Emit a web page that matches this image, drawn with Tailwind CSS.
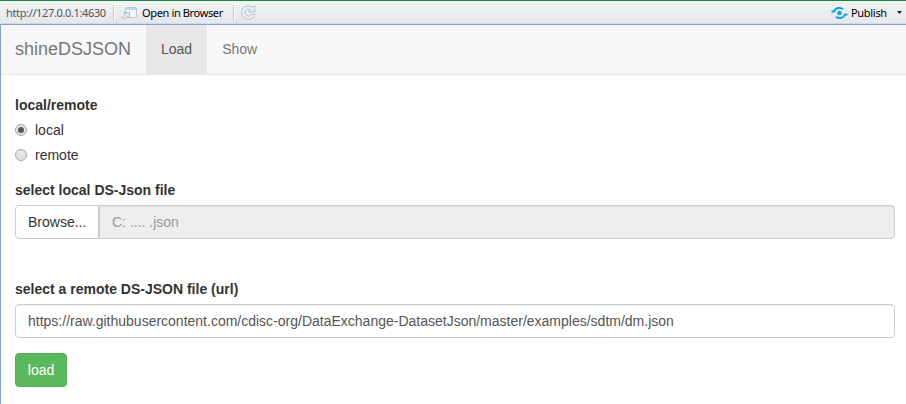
<!DOCTYPE html>
<html lang="en">
<head>
<meta charset="utf-8">
<title>shineDSJSON</title>
<script src="https://cdn.jsdelivr.net/npm/@tailwindcss/browser@4"></script>
</head>
<body class="flex h-screen flex-col overflow-hidden bg-white font-['Liberation_Sans',Arial,sans-serif] text-sm leading-5 text-[#333]">
  <header class="flex h-6 shrink-0 items-center border-t border-[#15883e] bg-linear-to-b from-[#f2f3f5] to-[#e4e7eb] font-['Noto_Sans',sans-serif] text-[11px] leading-none text-black shadow-[inset_0_-1px_0_#d5d9dd]">
    <span class="ml-1.5 w-[107px] whitespace-nowrap tracking-[-0.36px] text-[#555]">http://127.0.0.1:4630</span>
    <span class="h-[15px] w-0.5 border-r border-white bg-[#c4c7ca]"></span>
    <svg class="ml-[6px]" width="17" height="14" viewBox="0 0 17 14" fill="none">
      <rect x="4.5" y="1.500" width="11" height="10" rx="1.500" fill="#f5f9fc" stroke="#b9cbd9"/>
      <path d="M5 2h10v2H5z" fill="#bcdcf0"/>
      <path d="M3 6.500h5.500V12L6.700 10.200 3.500 13 1 11.500 4.600 8.200z" fill="#e5eaf0" stroke="#a5b0bb" stroke-width=".8"/>
    </svg>
    <span class="ml-[4px] w-[91px] whitespace-nowrap tracking-[-0.36px]">Open in Browser</span>
    <span class="h-[15px] w-0.5 border-r border-white bg-[#c4c7ca]"></span>
    <svg class="ml-[5px]" width="17" height="17" viewBox="0 0 17 17">
      <path d="M12.600 3.200 14.800 1.500V7.800H8.500L10.500 5.600A3.500 3.500 0 1 0 11.700 10.200H15A6.900 6.900 0 1 1 12.600 3.200Z" fill="#e5edf5" stroke="#b2bfcc" stroke-width=".9" stroke-linejoin="round"/>
    </svg>
    <svg class="ml-auto" width="17" height="14" viewBox="0 0 17 14" fill="none" stroke="#189fe5" stroke-width="2">
      <circle cx="8.500" cy="7" r="2.300" fill="#189fe5" stroke="none"/>
      <path d="M.5 5.500H3C4.500 1.500 9.500 1 12 3.200M16.500 8.500H14C12.500 12.500 7.500 13 5 10.800"/>
    </svg>
    <span class="ml-[3px] w-[46px] whitespace-nowrap tracking-[-0.3px]">Publish</span>
    <svg class="mr-1" width="5" height="4" viewBox="0 0 5 4"><path d="M0 0h5L2.500 3z" fill="#222"/></svg>
  </header>

  <div class="min-h-0 flex-1 border-t border-l border-[#80a3dc]">
    <nav class="flex h-[50px] border-b border-[#e7e7e7] bg-[#f8f8f8] leading-5 text-[#777]">
      <a class="w-[145px] py-[14px] pl-3.5 text-lg leading-5">shineDSJSON</a>
      <a class="bg-[#e7e7e7] px-[15px] py-[14px] text-[#555]">Load</a>
      <a class="px-[15px] py-[14px]">Show</a>
    </nav>

    <main class="pt-5 pr-[11px] pl-3.5">
      <div class="font-bold">local/remote</div>
      <label class="mt-[5px] flex items-center gap-2">
        <span class="flex size-3 items-center justify-center rounded-full border border-[#a5a5a5] bg-linear-to-b from-[#e8e8e8] to-[#dedede]"><span class="size-1.5 rounded-full bg-[#555]"></span></span>local
      </label>
      <label class="mt-[5px] flex items-center gap-2">
        <span class="size-3 rounded-full border border-[#a5a5a5] bg-linear-to-b from-[#e8e8e8] to-[#dedede]"></span>remote
      </label>

      <div class="mt-[15px] font-bold">select local DS-Json file</div>
      <div class="mt-[5px] flex h-[34px]">
        <span class="w-[84px] rounded-l border border-[#ccc] bg-white py-1.5 pl-3">Browse...</span>
        <div class="flex-1 rounded-r border border-[#ccc] bg-[#eee] px-3 py-1.5 text-[#999] shadow-[inset_0_1px_1px_rgba(0,0,0,0.075)]">C: .... .json</div>
      </div>

      <div class="mt-10 font-bold">select a remote DS-JSON file (url)</div>
      <div class="mt-[5px] h-[34px] rounded border border-[#ccc] bg-white px-3 py-1.5 text-[#555] shadow-[inset_0_1px_1px_rgba(0,0,0,0.075)]">https://raw.githubusercontent.com/cdisc-org/DataExchange-DatasetJson/master/examples/sdtm/dm.json</div>
      <button class="mt-[15px] block h-[34px] w-[52px] rounded border border-[#4cae4c] bg-[#5cb85c] text-white">load</button>
    </main>
  </div>
</body>
</html>
